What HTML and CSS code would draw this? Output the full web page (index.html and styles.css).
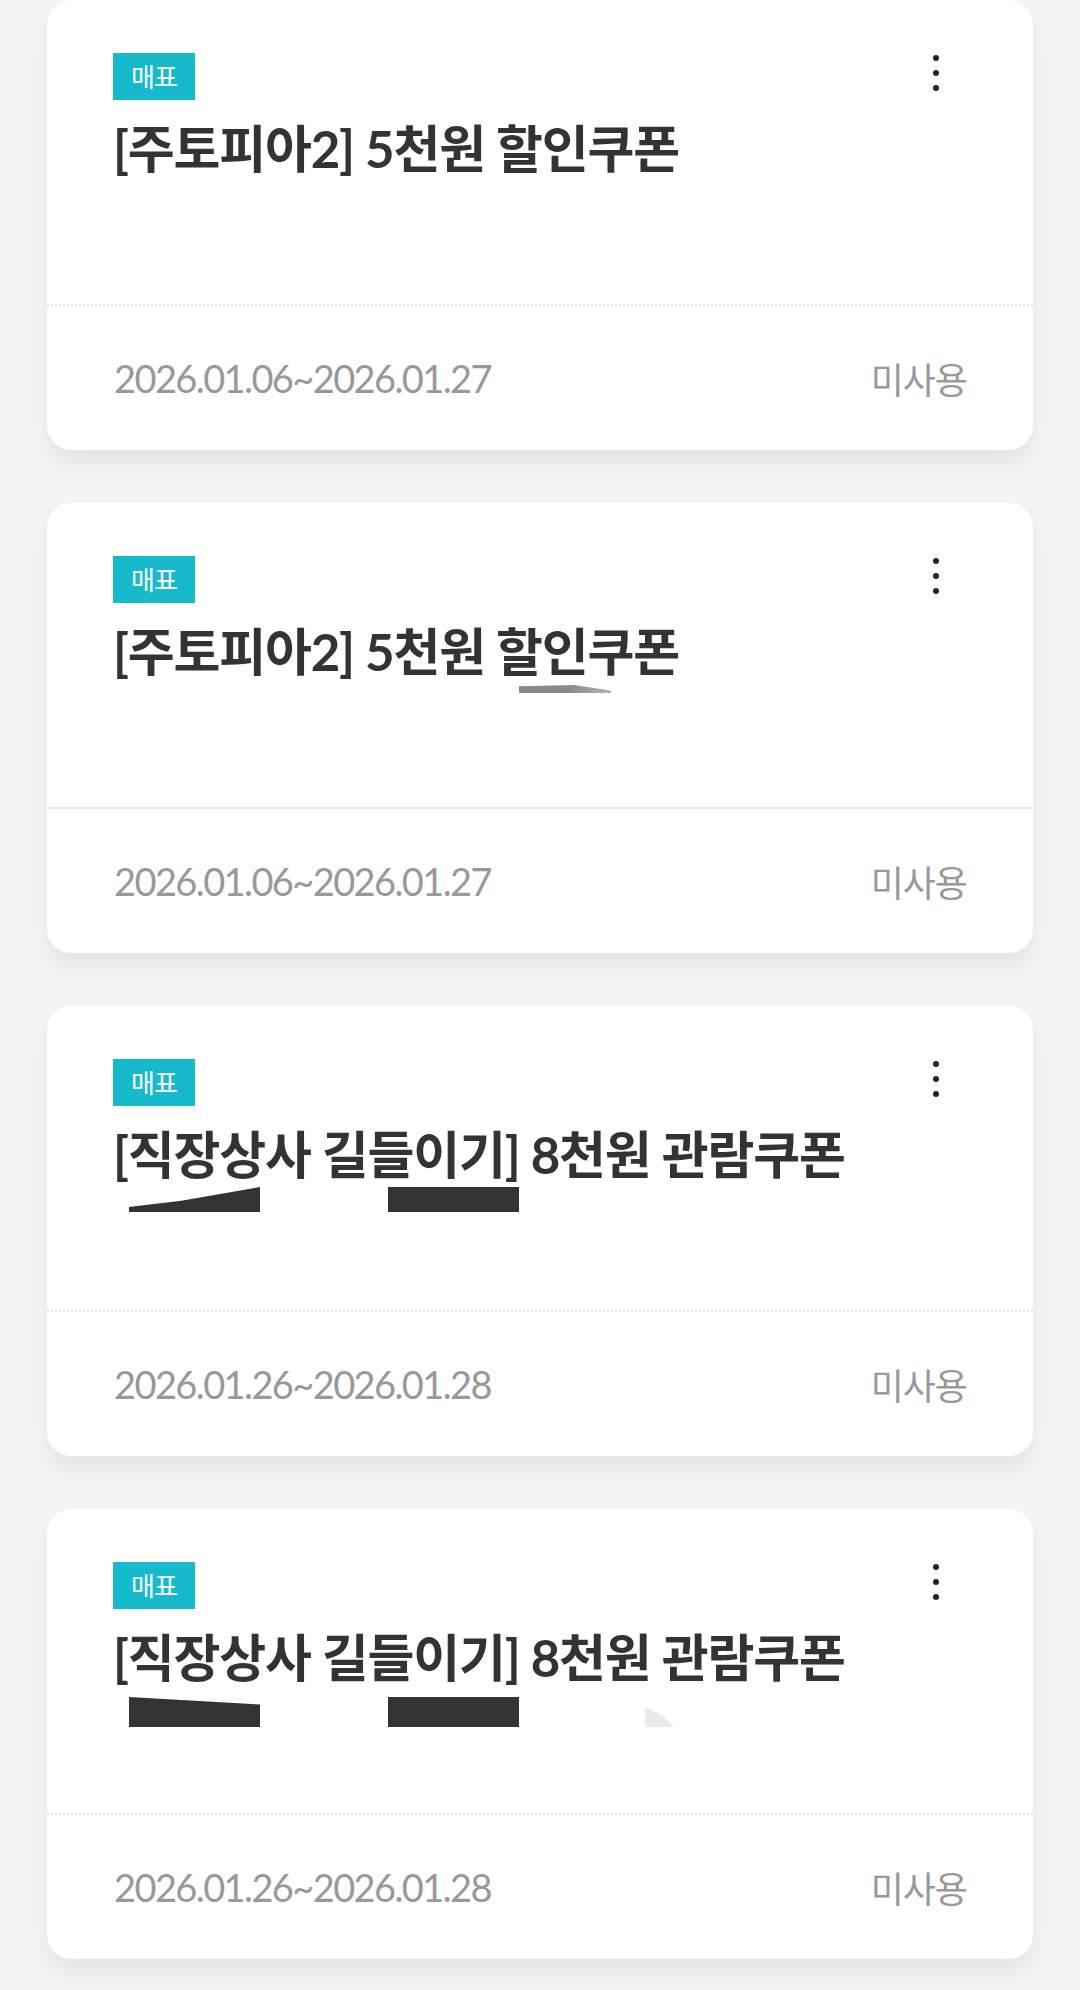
FILE: index.html
```html
<!DOCTYPE html>
<html lang="ko">
<head>
  <meta charset="UTF-8" />
  <meta name="viewport" content="width=device-width, initial-scale=1.0" />
  <title>쿠폰함</title>
  <link rel="stylesheet" href="styles.css">
</head>
<body>
  <div class="coupon-list">

    <div class="card">
      <div class="card-body">
        <div class="card-head">
          <span class="tag">매표</span>
          <button class="more" aria-label="더보기"><i></i><i></i><i></i></button>
        </div>
        <h2 class="title">[주토피아2] 5천원 할인쿠폰</h2>
      </div>
      <div class="card-foot">
        <span class="period">2026.01.06~2026.01.27</span>
        <span class="state">미사용</span>
      </div>
    </div>

    <div class="card">
      <div class="card-body">
        <div class="card-head">
          <span class="tag">매표</span>
          <button class="more" aria-label="더보기"><i></i><i></i><i></i></button>
        </div>
        <h2 class="title">[주토피아2] 5천원 할인쿠폰</h2>
        <div class="hidden-line">
          <span class="smear"></span>
        </div>
      </div>
      <div class="card-foot">
        <span class="period">2026.01.06~2026.01.27</span>
        <span class="state">미사용</span>
      </div>
    </div>

    <div class="card">
      <div class="card-body">
        <div class="card-head">
          <span class="tag">매표</span>
          <button class="more" aria-label="더보기"><i></i><i></i><i></i></button>
        </div>
        <h2 class="title">[직장상사 길들이기] 8천원 관람쿠폰</h2>
        <div class="hidden-line redacted up">
          <span class="block ramp"></span>
          <span class="block"></span>
        </div>
      </div>
      <div class="card-foot">
        <span class="period">2026.01.26~2026.01.28</span>
        <span class="state">미사용</span>
      </div>
    </div>

    <div class="card">
      <div class="card-body">
        <div class="card-head">
          <span class="tag">매표</span>
          <button class="more" aria-label="더보기"><i></i><i></i><i></i></button>
        </div>
        <h2 class="title">[직장상사 길들이기] 8천원 관람쿠폰</h2>
        <div class="hidden-line redacted">
          <span class="block slope"></span>
          <span class="block"></span>
          <span class="ghost"></span>
        </div>
      </div>
      <div class="card-foot">
        <span class="period">2026.01.26~2026.01.28</span>
        <span class="state">미사용</span>
      </div>
    </div>

  </div>
</body>
</html>
```

FILE: styles.css
```css
* {
  margin: 0;
  padding: 0;
  box-sizing: border-box;
}
body {
  font-family: 'Lato', 'Noto Sans CJK KR', sans-serif;
  background: #f4f4f4;
  color: #333;
  width: 1080px;
  height: 1990px;
  overflow: hidden;
}
.coupon-list {
  display: flex;
  flex-direction: column;
  gap: 53px;
  padding: 0 47px;
}
.card {
  background: #fff;
  border-radius: 24px;
  box-shadow: 0 12px 22px rgba(0, 0, 0, 0.07);
}
.card-body {
  height: 304px;
  padding: 53px 67px 0 66px;
}
.card-head {
  display: flex;
  justify-content: space-between;
  align-items: center;
  height: 47px;
}
.tag {
  display: inline-block;
  height: 47px;
  line-height: 46px;
  padding: 0 18px;
  background: #17b9cd;
  color: #fff;
  font-family: 'Noto Sans CJK KR', sans-serif;
  font-size: 26px;
  letter-spacing: -1px;
}
.more {
  display: flex;
  flex-direction: column;
  align-items: center;
  gap: 9px;
  width: 60px;
  margin-top: -7px;
  background: none;
  border: none;
}
.more i {
  display: block;
  width: 6px;
  height: 6px;
  border-radius: 50%;
  background: #222;
}
.title {
  margin-top: 19px;
  font-size: 51px;
  line-height: 60px;
  font-weight: 700;
  letter-spacing: -1.2px;
  color: #333;
  white-space: nowrap;
}
.hidden-line {
  height: 40px;
}
.smear {
  display: block;
  width: 92px;
  height: 8px;
  margin: 3px 0 0 406px;
  background: linear-gradient(90deg, #8a8a8a 55%, #b5b5b5);
  clip-path: polygon(0 15%, 60% 0, 100% 70%, 100% 100%, 0 100%);
}
.redacted {
  display: flex;
  align-items: flex-end;
  gap: 128px;
  padding-left: 16px;
  height: 39px;
}
.redacted.up {
  height: 27px;
}
.block {
  display: block;
  width: 131px;
  height: 25px;
  background: #333;
}
.redacted:not(.up) .block {
  height: 30px;
}
.block.ramp {
  clip-path: polygon(0 80%, 40% 55%, 100% 0, 100% 100%, 0 100%);
}
.block.slope {
  clip-path: polygon(0 0, 40% 10%, 100% 25%, 100% 100%, 0 100%);
}
.ghost {
  display: block;
  width: 29px;
  height: 20px;
  margin-left: -2px;
  background: #eaeaea;
  clip-path: polygon(0 0, 60% 40%, 100% 100%, 0 100%);
}
.card-foot {
  display: flex;
  justify-content: space-between;
  align-items: center;
  height: 146px;
  padding: 0 66px 0 67px;
  border-top: 2px dotted #e2e2e2;
}
.period {
  font-size: 38px;
  letter-spacing: -1.6px;
  color: #999;
}
.state {
  font-family: 'Noto Sans CJK KR', sans-serif;
  font-size: 36px;
  letter-spacing: -1px;
  color: #999;
}
```
